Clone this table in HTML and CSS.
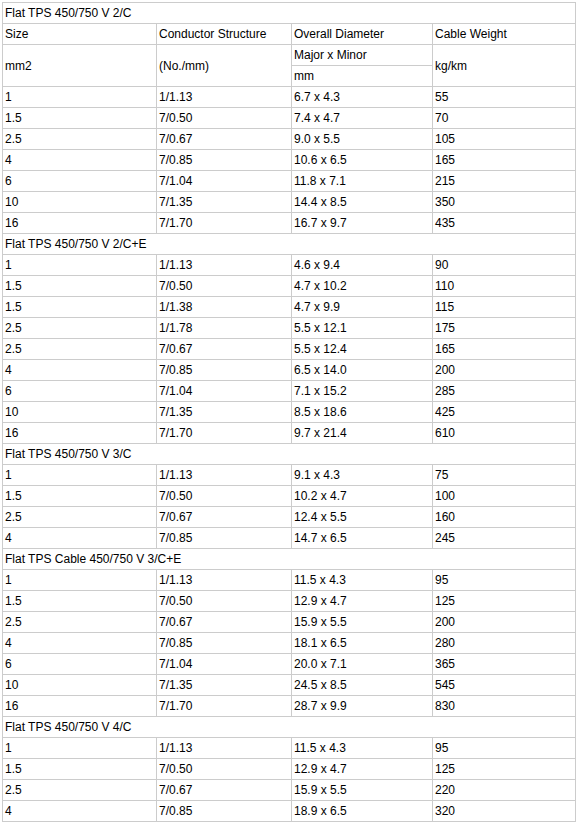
FILE: index.html
```html
<!DOCTYPE html>
<html>
<head>
<meta charset="utf-8">
<link rel="stylesheet" href="styles.css">
</head>
<body>
<table class="spec">
<colgroup><col class="c1"><col class="c2"><col class="c3"><col class="c4"></colgroup>
<tbody>
<tr><td colspan="4">Flat TPS 450/750 V 2/C</td></tr>
<tr><td>Size</td><td>Conductor Structure</td><td>Overall Diameter</td><td>Cable Weight</td></tr>
<tr><td rowspan="2">mm2</td><td rowspan="2">(No./mm)</td><td>Major x Minor</td><td rowspan="2">kg/km</td></tr>
<tr><td>mm</td></tr>
<tr><td>1</td><td>1/1.13</td><td>6.7 x 4.3</td><td>55</td></tr>
<tr><td>1.5</td><td>7/0.50</td><td>7.4 x 4.7</td><td>70</td></tr>
<tr><td>2.5</td><td>7/0.67</td><td>9.0 x 5.5</td><td>105</td></tr>
<tr><td>4</td><td>7/0.85</td><td>10.6 x 6.5</td><td>165</td></tr>
<tr><td>6</td><td>7/1.04</td><td>11.8 x 7.1</td><td>215</td></tr>
<tr><td>10</td><td>7/1.35</td><td>14.4 x 8.5</td><td>350</td></tr>
<tr><td>16</td><td>7/1.70</td><td>16.7 x 9.7</td><td>435</td></tr>
<tr><td colspan="4">Flat TPS 450/750 V 2/C+E</td></tr>
<tr><td>1</td><td>1/1.13</td><td>4.6 x 9.4</td><td>90</td></tr>
<tr><td>1.5</td><td>7/0.50</td><td>4.7 x 10.2</td><td>110</td></tr>
<tr><td>1.5</td><td>1/1.38</td><td>4.7 x 9.9</td><td>115</td></tr>
<tr><td>2.5</td><td>1/1.78</td><td>5.5 x 12.1</td><td>175</td></tr>
<tr><td>2.5</td><td>7/0.67</td><td>5.5 x 12.4</td><td>165</td></tr>
<tr><td>4</td><td>7/0.85</td><td>6.5 x 14.0</td><td>200</td></tr>
<tr><td>6</td><td>7/1.04</td><td>7.1 x 15.2</td><td>285</td></tr>
<tr><td>10</td><td>7/1.35</td><td>8.5 x 18.6</td><td>425</td></tr>
<tr><td>16</td><td>7/1.70</td><td>9.7 x 21.4</td><td>610</td></tr>
<tr><td colspan="4">Flat TPS 450/750 V 3/C</td></tr>
<tr><td>1</td><td>1/1.13</td><td>9.1 x 4.3</td><td>75</td></tr>
<tr><td>1.5</td><td>7/0.50</td><td>10.2 x 4.7</td><td>100</td></tr>
<tr><td>2.5</td><td>7/0.67</td><td>12.4 x 5.5</td><td>160</td></tr>
<tr><td>4</td><td>7/0.85</td><td>14.7 x 6.5</td><td>245</td></tr>
<tr><td colspan="4">Flat TPS Cable 450/750 V 3/C+E</td></tr>
<tr><td>1</td><td>1/1.13</td><td>11.5 x 4.3</td><td>95</td></tr>
<tr><td>1.5</td><td>7/0.50</td><td>12.9 x 4.7</td><td>125</td></tr>
<tr><td>2.5</td><td>7/0.67</td><td>15.9 x 5.5</td><td>200</td></tr>
<tr><td>4</td><td>7/0.85</td><td>18.1 x 6.5</td><td>280</td></tr>
<tr><td>6</td><td>7/1.04</td><td>20.0 x 7.1</td><td>365</td></tr>
<tr><td>10</td><td>7/1.35</td><td>24.5 x 8.5</td><td>545</td></tr>
<tr><td>16</td><td>7/1.70</td><td>28.7 x 9.9</td><td>830</td></tr>
<tr><td colspan="4">Flat TPS 450/750 V 4/C</td></tr>
<tr><td>1</td><td>1/1.13</td><td>11.5 x 4.3</td><td>95</td></tr>
<tr><td>1.5</td><td>7/0.50</td><td>12.9 x 4.7</td><td>125</td></tr>
<tr><td>2.5</td><td>7/0.67</td><td>15.9 x 5.5</td><td>220</td></tr>
<tr><td>4</td><td>7/0.85</td><td>18.9 x 6.5</td><td>320</td></tr>
</tbody>
</table>
</body>
</html>
```
FILE: styles.css
```css
html, body {
  margin: 0;
  padding: 0;
  background: #fff;
}
body {
  font-family: "Liberation Sans", Arial, sans-serif;
  font-size: 12px;
  color: #000;
}
.spec {
  border-collapse: collapse;
  table-layout: fixed;
  width: 573px;
  margin: 2px 0 0 2px;
}
.spec .c1 { width: 154px; }
.spec .c2 { width: 135px; }
.spec .c3 { width: 141px; }
.spec .c4 { width: 143px; }
.spec td {
  border: 1px solid #ccc;
  padding: 3px 2px;
  line-height: 14px;
  height: 14px;
  vertical-align: middle;
  text-align: left;
  white-space: nowrap;
}
```
